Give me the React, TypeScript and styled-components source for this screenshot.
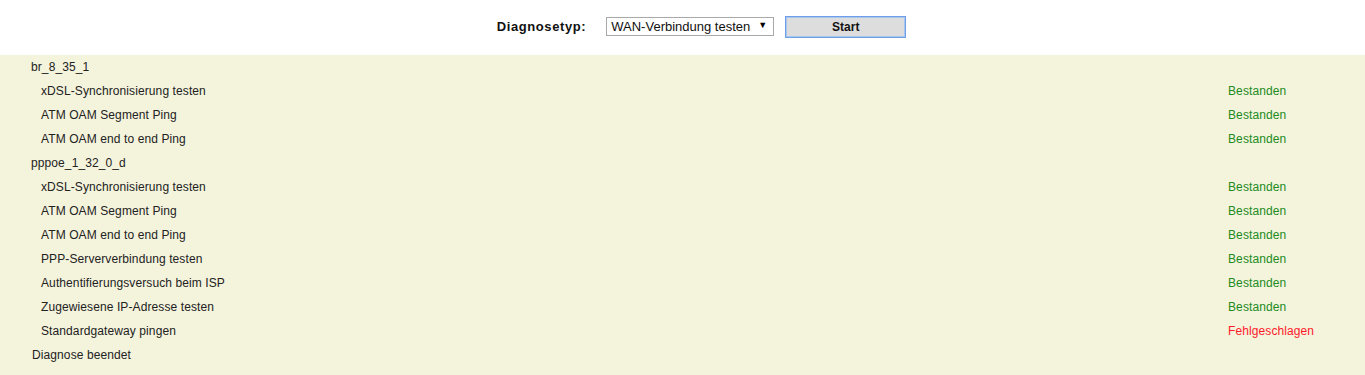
import React from "react";
import styled, { createGlobalStyle } from "styled-components";

const GlobalStyle = createGlobalStyle`
  html, body { margin: 0; padding: 0; background: #ffffff; }
  body { font-family: Arial, "Liberation Sans", sans-serif; font-size: 12px; color: #222; }
`;

const Page = styled.div`
  width: 1365px;
  min-height: 375px;
  display: flex;
  flex-direction: column;
`;

const Toolbar = styled.div`
  height: 55px;
  display: flex;
  align-items: center;
  justify-content: center;
  padding-left: 38px;
  padding-bottom: 2px;
  box-sizing: border-box;
`;

const Label = styled.label`
  font-weight: bold;
  font-size: 13px;
  letter-spacing: 0.6px;
  color: #111;
  margin-right: 20px;
`;

const SelectWrap = styled.div`
  position: relative;
  width: 168px;
  height: 19px;
  margin-right: 11px;
`;

const Select = styled.select`
  appearance: none;
  -webkit-appearance: none;
  width: 100%;
  height: 100%;
  box-sizing: border-box;
  border: 1px solid #a9a9a9;
  background: #fff;
  font-family: Arial, "Liberation Sans", sans-serif;
  font-size: 13px;
  color: #111;
  padding: 0 0 0 4px;
  margin: 0;
  border-radius: 0;
  outline: none;
`;

const Arrow = styled.span`
  position: absolute;
  right: 7px;
  top: 3px;
  font-size: 9px;
  color: #000;
  pointer-events: none;
`;

const StartButton = styled.button`
  width: 121px;
  height: 22px;
  box-sizing: border-box;
  background: #dddddd;
  border: 1px solid #6d9ee6;
  box-shadow: inset 0 0 0 1px #a9c6f2;
  font-family: Arial, "Liberation Sans", sans-serif;
  font-weight: bold;
  font-size: 12px;
  color: #111;
  padding: 0;
`;

const Panel = styled.div`
  flex: 1;
  background: #f4f3dc;
  display: flex;
  flex-direction: column;
`;

const Row = styled.div<{ $indent: number }>`
  height: 24px;
  display: flex;
  align-items: center;
  padding-left: ${(p) => p.$indent}px;
  letter-spacing: 0.1px;
`;

const Name = styled.span`
  flex: 1;
  color: #222;
`;

const Result = styled.span<{ $failed?: boolean }>`
  width: 137px;
  color: ${(p) => (p.$failed ? "#ff1a2a" : "#228b22")};
`;

type Item = { name: string; kind: "group" | "test" | "end"; failed?: boolean };

const items: Item[] = [
  { name: "br_8_35_1", kind: "group" },
  { name: "xDSL-Synchronisierung testen", kind: "test" },
  { name: "ATM OAM Segment Ping", kind: "test" },
  { name: "ATM OAM end to end Ping", kind: "test" },
  { name: "pppoe_1_32_0_d", kind: "group" },
  { name: "xDSL-Synchronisierung testen", kind: "test" },
  { name: "ATM OAM Segment Ping", kind: "test" },
  { name: "ATM OAM end to end Ping", kind: "test" },
  { name: "PPP-Serververbindung testen", kind: "test" },
  { name: "Authentifierungsversuch beim ISP", kind: "test" },
  { name: "Zugewiesene IP-Adresse testen", kind: "test" },
  { name: "Standardgateway pingen", kind: "test", failed: true },
  { name: "Diagnose beendet", kind: "end" },
];

export default function App() {
  return (
    <Page>
      <GlobalStyle />
      <Toolbar>
        <Label htmlFor="diag">Diagnosetyp:</Label>
        <SelectWrap>
          <Select id="diag" defaultValue="wan">
            <option value="wan">WAN-Verbindung testen</option>
          </Select>
          <Arrow>▼</Arrow>
        </SelectWrap>
        <StartButton>Start</StartButton>
      </Toolbar>
      <Panel>
        {items.map((it, i) => (
          <Row key={i} $indent={it.kind === "test" ? 41 : it.kind === "group" ? 31 : 32}>
            <Name>{it.name}</Name>
            {it.kind === "test" && (
              <Result $failed={it.failed}>{it.failed ? "Fehlgeschlagen" : "Bestanden"}</Result>
            )}
          </Row>
        ))}
      </Panel>
    </Page>
  );
}
